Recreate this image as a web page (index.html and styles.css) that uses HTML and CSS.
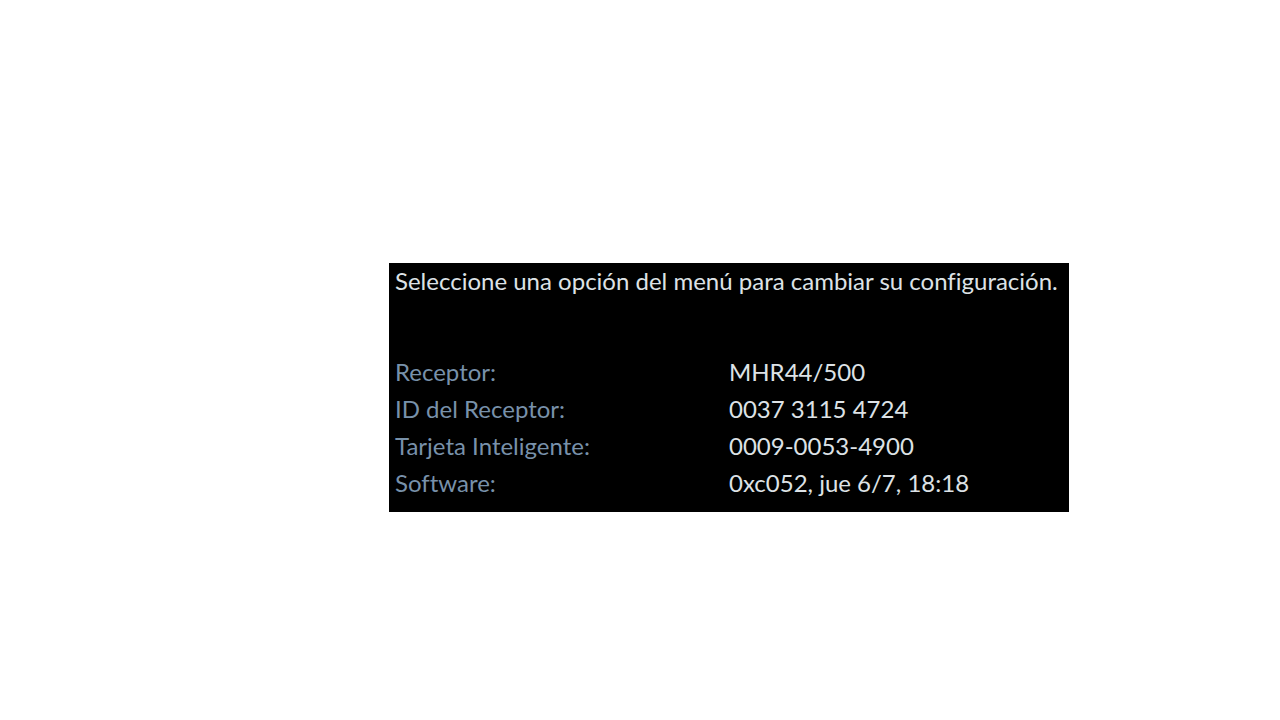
FILE: index.html
```html
<!DOCTYPE html>
<html lang="es">
<head>
<meta charset="utf-8">
<meta name="viewport" content="width=device-width, initial-scale=1">
<title>Configuración</title>
<link rel="stylesheet" href="styles.css">
</head>
<body>
<main class="panel">
  <p class="intro">Seleccione una opción del menú para cambiar su configuración.</p>
  <dl class="details">
    <dt>Receptor:</dt><dd>MHR44/500</dd>
    <dt>ID del Receptor:</dt><dd>0037 3115 4724</dd>
    <dt>Tarjeta Inteligente:</dt><dd>0009-0053-4900</dd>
    <dt>Software:</dt><dd>0xc052, jue 6/7, 18:18</dd>
  </dl>
</main>
</body>
</html>
```

FILE: styles.css
```css
* { box-sizing: border-box; }
body {
  margin: 0;
  padding: 263px 211px 208px 389px;
  background: #fff;
  font-family: Lato, sans-serif;
  font-size: 24px;
  font-variant-ligatures: none;
  line-height: 36px;
}
.panel {
  padding: 0 6px 11px;
  background: #000;
  color: #dde2e6;
}
.intro { margin: 0 0 55px; }
.details {
  display: grid;
  grid-template-columns: 1fr 1fr;
  row-gap: 1px;
  margin: 0;
}
.details dt { color: #7891aa; }
.details dd { margin: 0; }
```
